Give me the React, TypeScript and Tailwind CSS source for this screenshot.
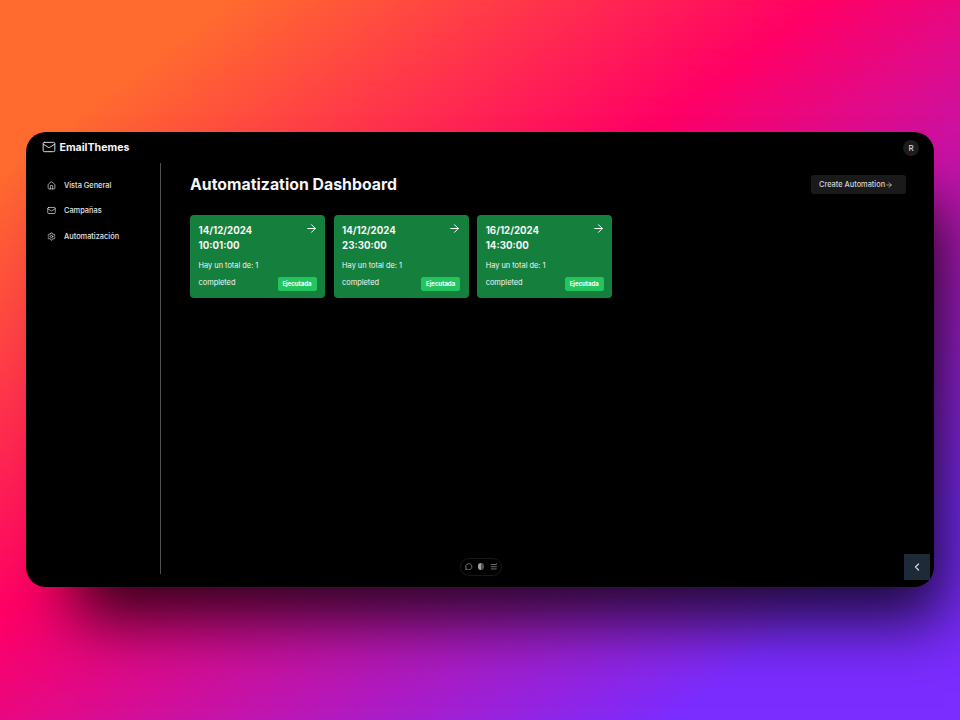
import { ArrowRight, ChevronLeft, Home, Mail, MessageCircle, Menu, Settings } from "lucide-react";

const font = { fontFamily: "Inter, sans-serif" };

const nav = [
  { label: "Vista General", Icon: Home },
  { label: "Campañas", Icon: Mail },
  { label: "Automatización", Icon: Settings },
];

const cards = [
  { date: "14/12/2024", time: "10:01:00" },
  { date: "14/12/2024", time: "23:30:00" },
  { date: "16/12/2024", time: "14:30:00" },
];

export default function App() {
  return (
    <div
      style={font}
      className="h-[720px] w-[960px] overflow-hidden flex items-center justify-center bg-[linear-gradient(to_bottom_right,#ff6b2f_12%,#ff0066_43%,#7b2cff_85%)]"
    >
      <div className="relative mb-[1px] flex h-[455px] w-[908px] flex-col rounded-[20px] bg-black text-white shadow-[30px_52px_60px_-20px_rgba(0,0,0,0.8)]">
        <header className="flex h-[31px] shrink-0 items-center justify-between pl-[16px] pr-[15px]">
          <div className="flex items-center gap-[3.5px]">
            <Mail size={14} strokeWidth={1.6} className="text-neutral-200" />
            <span className="text-[10.6px] font-bold text-neutral-100">EmailThemes</span>
          </div>
          <div className="flex h-[16px] w-[16px] items-center justify-center rounded-full bg-[#1c1c1c] text-[8px] font-normal text-neutral-200">
            R
          </div>
        </header>
        <div className="flex h-[411px]">
          <aside className="flex w-[135px] shrink-0 flex-col gap-[9px] border-r border-[#4f4f4f] pl-[20.5px] pt-[14px]">
            {nav.map(({ label, Icon }) => (
              <div key={label} className="flex h-[16.5px] items-center gap-[8.5px] text-[7.4px] font-medium text-neutral-200">
                <Icon size={9} strokeWidth={1.8} />
                <span>{label}</span>
              </div>
            ))}
          </aside>
          <main className="flex-1 pl-[29px] pr-[28px] pt-[12px]">
            <div className="flex h-[19px] items-center justify-between">
              <h1 className="text-[15.85px] font-bold leading-[19px] text-neutral-100">Automatization Dashboard</h1>
              <button className="flex h-[19px] w-[95px] items-center rounded-[3px] bg-[#1a1a1a] pl-[8px] text-[7.4px] font-medium text-neutral-300">
                Create Automation
                <ArrowRight size={8} strokeWidth={2} />
              </button>
            </div>
            <div className="mt-[21px] flex gap-[8.6px]">
              {cards.map((c, i) => (
                <div key={i} className="flex h-[83px] w-[135px] flex-col rounded-[4px] bg-[#15803d] px-[8.5px] pt-[7.5px]">
                  <div className="flex items-start justify-between">
                    <div className="pt-[0.5px] text-[9.7px] font-bold leading-[15px] text-neutral-100">
                      <div>{c.date}</div>
                      <div>{c.time}</div>
                    </div>
                    <ArrowRight size={13} strokeWidth={1.8} className="-mr-[1px] -mt-[0.5px]" />
                  </div>
                  <div className="mt-[7px] text-[7.4px] leading-[11px] text-neutral-100">Hay un total de: 1</div>
                  <div className="mt-[5.5px] flex items-center justify-between">
                    <span className="-mt-[1px] text-[7.4px] text-neutral-100">completed</span>
                    <span className="flex h-[14px] w-[39px] items-center justify-center rounded-[2px] bg-[#22c55e] text-[6px] font-bold text-white">
                      Ejecutada
                    </span>
                  </div>
                </div>
              ))}
            </div>
          </main>
        </div>
        <div className="absolute bottom-[11.5px] left-[434px] flex h-[18px] w-[42px] items-center justify-between rounded-full border border-[#181818] px-[4px] text-neutral-400">
          <MessageCircle size={7.5} strokeWidth={2.2} />
          <span className="h-[6.5px] w-[6.5px] rounded-full bg-[linear-gradient(90deg,#a3a3a3_50%,#525252_50%)]" />
          <span className="relative">
            <Menu size={7.5} strokeWidth={2.2} />
            <span className="absolute right-0 top-0 h-[1.5px] w-[1.5px] rounded-full bg-[#2563eb]" />
          </span>
        </div>
        <div className="absolute bottom-[7.5px] right-[4.5px] flex h-[25.5px] w-[25.5px] items-center justify-center bg-[#1f2a38] text-neutral-300">
          <ChevronLeft size={12} strokeWidth={2.6} />
        </div>
      </div>
    </div>
  );
}
